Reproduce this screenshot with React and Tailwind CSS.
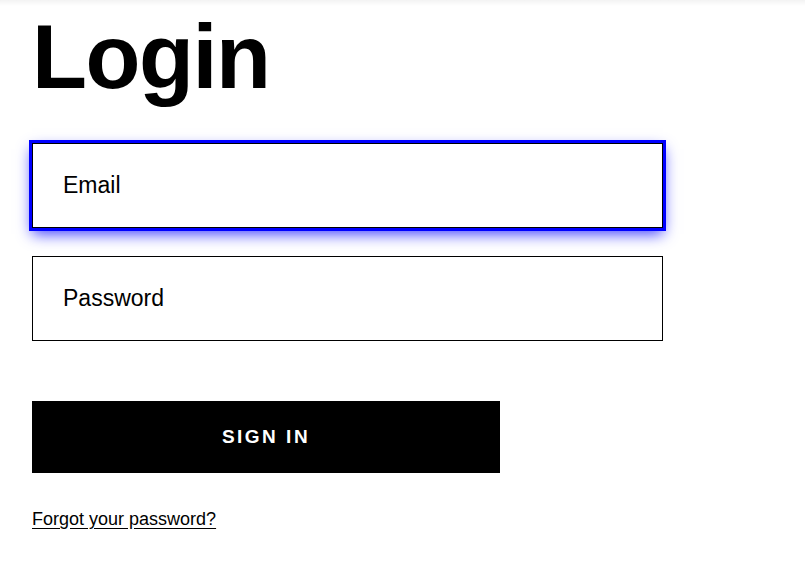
export default function App() {
  return (
    <div className="min-h-[564px] bg-white font-['Liberation_Sans',Arial,sans-serif] text-black">
      <div className="h-[6px] bg-linear-to-b from-[#f3f3f3] to-white" />
      <div className="px-[32px] pt-[6px]">
        <h1 className="text-[90px] font-bold leading-none tracking-[-1.5px]">Login</h1>

        <form className="mt-[41px] flex flex-col" onSubmit={(e) => e.preventDefault()}>
          <input
            type="email"
            placeholder="Email"
            className="h-[85px] w-[631px] border border-black bg-white px-[30px] text-[23px] placeholder:text-black outline-[3px] outline-solid outline-[#0000ff] shadow-[0_6px_14px_rgba(0,0,255,0.75)]"
          />
          <input
            type="password"
            placeholder="Password"
            className="mt-[28px] h-[85px] w-[631px] border border-black bg-white px-[30px] text-[23px] placeholder:text-black outline-none"
          />
          <button
            type="submit"
            className="mt-[60px] h-[72px] w-[468px] bg-black text-[19px] font-bold uppercase tracking-[2.5px] text-white"
          >
            Sign in
          </button>
        </form>

        <a href="#" className="mt-[37px] block w-fit text-[18px] leading-none underline underline-offset-[3px]">
          Forgot your password?
        </a>
      </div>
    </div>
  );
}
